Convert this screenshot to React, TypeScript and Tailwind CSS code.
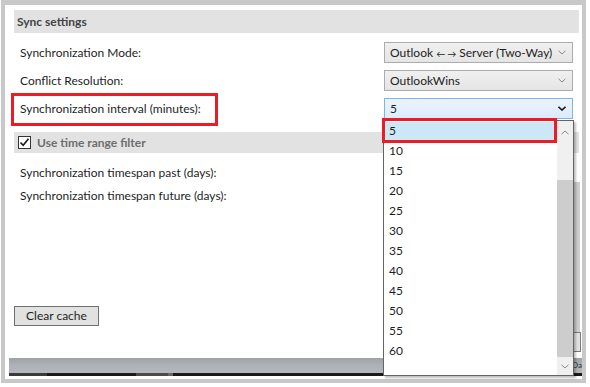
import React from "react";

const intervals = [5, 10, 15, 20, 25, 30, 35, 40, 45, 50, 55, 60];

function Chevron({ up = false, dark = false }: { up?: boolean; dark?: boolean }) {
  return (
    <svg width="8" height="5" viewBox="0 0 8 5" className={up ? "rotate-180" : ""}>
      <path
        d="M0.5 0.8 L4 4 L7.5 0.8"
        fill="none"
        stroke={dark ? "#1a1a1a" : "#8a8a8a"}
        strokeWidth={dark ? 1.6 : 1}
      />
    </svg>
  );
}

function Combo({ children, focused = false }: { children: React.ReactNode; focused?: boolean }) {
  return (
    <div
      className={
        focused
          ? "h-[21px] flex items-center justify-between pl-[5px] pr-[6px] border border-[#7eb4ea] bg-gradient-to-b from-[#ecf4fc] to-[#dcecfc]"
          : "h-[21px] flex items-center justify-between pl-[5px] pr-[6px] border border-[#acacac] bg-gradient-to-b from-[#f0f0f0] to-[#e5e5e5]"
      }
    >
      <span className="whitespace-nowrap">{children}</span>
      <Chevron dark={focused} />
    </div>
  );
}

export default function App() {
  return (
    <div className="relative w-[590px] h-[387px] bg-white overflow-hidden font-['Lato',sans-serif] text-[12px] text-[#1e1e1e]">
      <div className="ml-px w-[585px] h-[383px] border-x-4 border-t-[5px] border-b-4 border-[#c8c8c8] flex flex-col overflow-hidden">
        {/* Sync settings header */}
        <div className="ml-[9px] mr-[3px] mt-[5px] h-[23px] bg-[#e2e2e2] flex items-center pl-[3px] font-bold text-[#434343]">
          Sync settings
        </div>

        <div className="ml-[15px] mt-[9px] grid grid-cols-[364px_189px] gap-y-[7px] items-center">
          <span>Synchronization Mode:</span>
          <Combo>
            Outlook <span className="text-[9px]">←</span><span className="ml-[2px] text-[9px]">→</span> Server (Two-Way)
          </Combo>
          <span>Conflict Resolution:</span>
          <Combo>OutlookWins</Combo>
          <span>Synchronization interval (minutes):</span>
          <Combo focused>5</Combo>
        </div>

        {/* time range header */}
        <div className="ml-[9px] mr-[3px] mt-[13px] h-[21px] bg-[#e2e2e2] flex items-center pl-[4px] gap-[6px] font-bold text-[#6e6e6e]">
          <div className="w-[13px] h-[13px] border border-[#333] bg-white flex items-center justify-center">
            <svg width="11" height="11" viewBox="0 0 11 11">
              <path d="M1.5 5.5 L4.2 8.3 L9.5 1.8" fill="none" stroke="#1a1a1a" strokeWidth="1.6" />
            </svg>
          </div>
          <span>Use time range filter</span>
        </div>

        <div className="ml-[15px] mt-[10px] flex flex-col gap-[3px]">
          <div className="h-[20px] flex items-center">Synchronization timespan past (days):</div>
          <div className="h-[20px] flex items-center">Synchronization timespan future (days):</div>
        </div>

        <button className="ml-[9px] mt-[100px] w-[85px] h-[20px] border border-[#707070] bg-[#e1e1e1] text-[12px] leading-none">
          Clear cache
        </button>

        {/* bottom bar */}
        <div className="ml-[4px] mt-[32px] h-[15px] bg-gradient-to-b from-[#9ea1a5] via-[#aeb1b5] to-[#b4b7bb] flex justify-end">
          <span className="text-[8px] leading-[15px] text-[#2a2a2a]">Da</span>
        </div>
        <div className="ml-[4px] h-[3px] flex">
          <div className="w-[38px] bg-[#3a3a3a]" />
          <div className="w-[89px] bg-[#1d1915]" />
          <div className="w-[32px] bg-[#4e4944]" />
          <div className="w-[5px] bg-[#6a6560]" />
          <div className="flex-1 bg-[#1d1915]" />
        </div>
      </div>

      {/* page scrollbar behind the dropdown */}
      <div className="absolute left-[574px] top-[182px] w-[6px] h-[150px] bg-[#cdcdcd]" />
      <div className="absolute left-[573px] top-[332px] w-[8px] h-[20px] border border-[#7a7a7a] bg-[#e1e1e1]" />

      {/* open dropdown */}
      <div className="absolute left-[383px] top-[120px] w-[191px] h-[256px] border border-[#646464] bg-white flex shadow-[2px_2px_2px_rgba(0,0,0,0.25)]">
        <div className="flex-1 flex flex-col">
          {intervals.map((n, i) => (
            <div key={n} className="h-[20px] flex items-center">
              <div
                className={
                  i === 0
                    ? "mx-[2px] flex-1 h-[18px] flex items-center pl-[3px] bg-[#cce8f6]"
                    : "mx-[2px] flex-1 h-[18px] flex items-center pl-[3px]"
                }
              >
                {n}
              </div>
            </div>
          ))}
        </div>
        <div className="w-[16px] flex flex-col bg-[#f0f0f0]">
          <div className="h-[22px] flex items-center justify-center">
            <Chevron up />
          </div>
          <div className="h-[37px]" />
          <div className="flex-1 bg-[#cdcdcd]" />
          <div className="h-[18px] flex items-center justify-center">
            <Chevron />
          </div>
        </div>
      </div>

      {/* annotation boxes */}
      <div className="absolute left-[11px] top-[93px] w-[207px] h-[33px] border-[3px] border-[#ed1c24]" />
      <div className="absolute left-[382px] top-[118px] w-[175px] h-[25px] border-[3px] border-[#ed1c24]" />
    </div>
  );
}
